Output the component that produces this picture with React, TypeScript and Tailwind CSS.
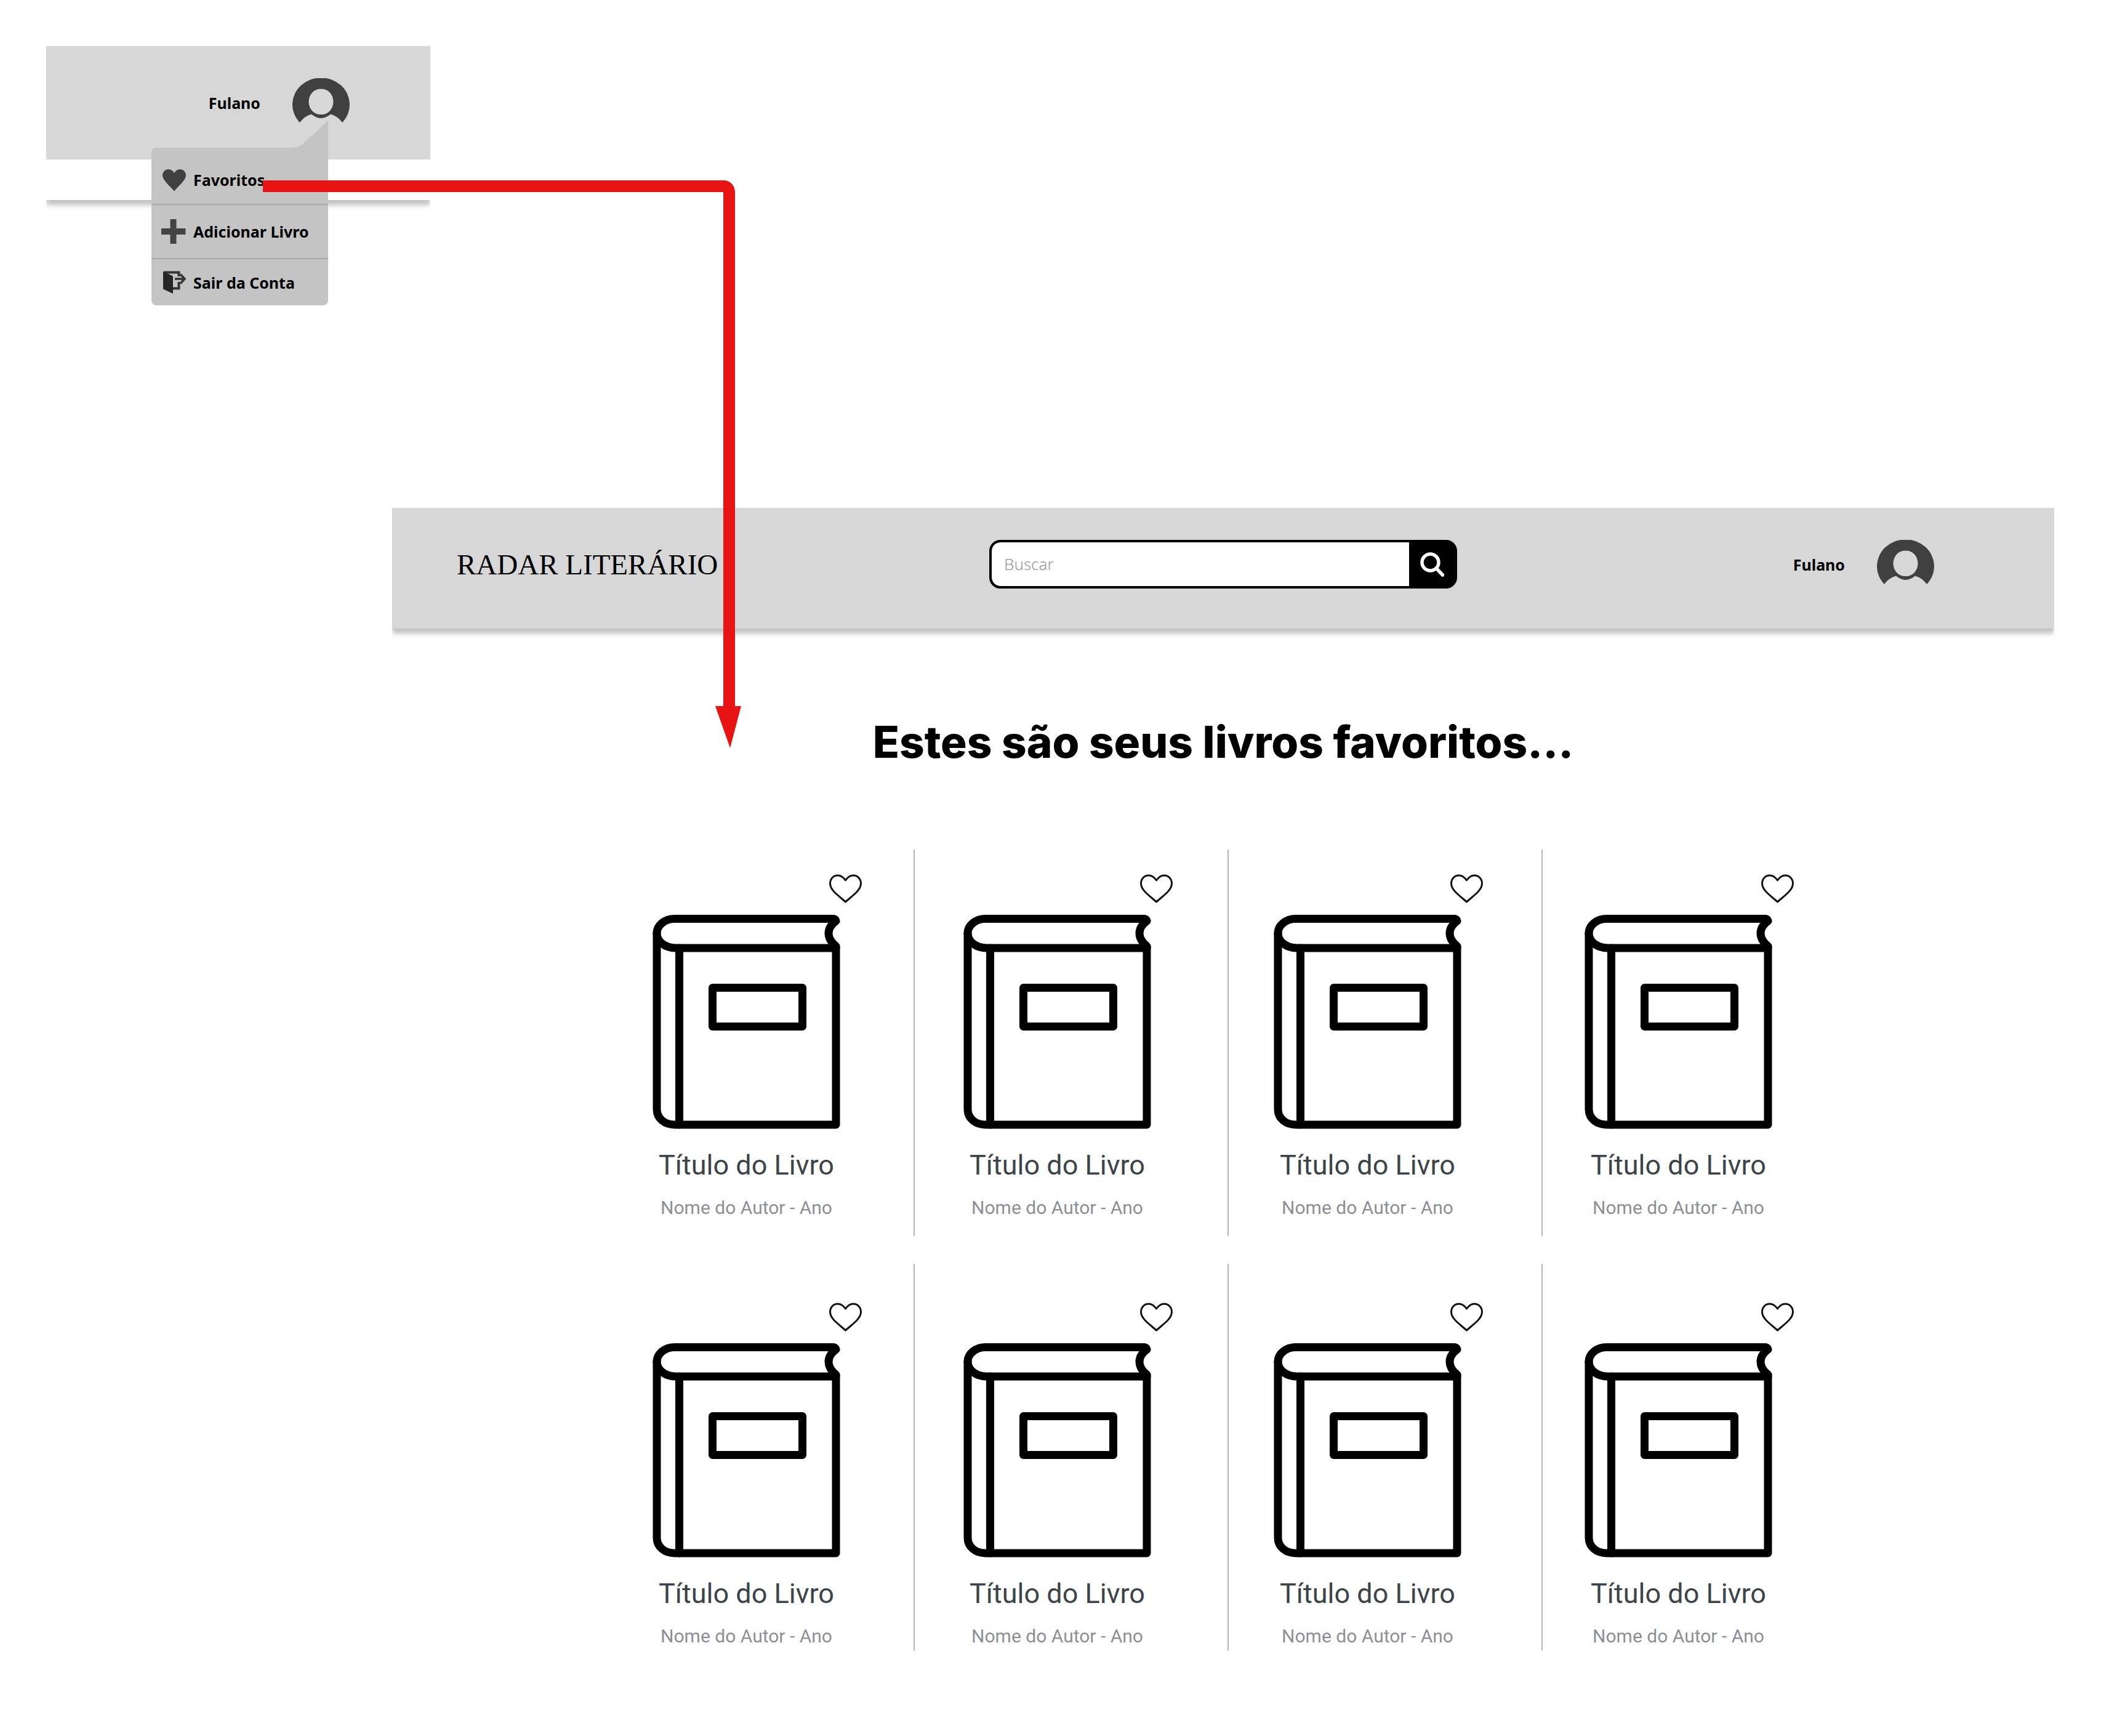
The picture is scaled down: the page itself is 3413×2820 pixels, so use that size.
import React from "react";

const shadow = "shadow-[0_8px_8px_rgba(0,0,0,0.25)] [clip-path:inset(0_0_-20px_0)]";

function Avatar() {
  return (
    <svg viewBox="0 0 94 80" className="h-20 w-[94px]" fill="#404040" aria-hidden="true">
      <path
        fillRule="evenodd"
        d="M12 72A46.500 43.500 0 1 1 81 72Q74 62 62 58.500Q46.500 71.500 31 58.500Q19 62 12 72ZM46.500 17.500A18.700 20.800 0 1 0 46.500 59A18.700 20.800 0 1 0 46.500 17.500Z"
      />
    </svg>
  );
}

function UserButton() {
  return (
    <button type="button" className="flex items-center gap-[52px] text-[25px] leading-9 font-bold">
      <span>Fulano</span>
      <Avatar />
    </button>
  );
}

function HeartSolid() {
  return (
    <svg viewBox="0 0 40 40" className="size-10" fill="#404040" aria-hidden="true">
      <path d="M21 38.500C15 31 2 21 2 13C2 7 6.500 3 11.500 3C15.500 3 19 5 21 9C23 5 26.500 3 30.500 3C35.500 3 40 7 40 13C40 21 27 31 21 38.500Z" />
    </svg>
  );
}

function Plus() {
  return (
    <svg viewBox="0 0 40 40" className="size-10" fill="#444444" aria-hidden="true">
      <path d="M14.500 0H24.500V15H39.500V25H24.500V40H14.500V25H0V15H14.500Z" />
    </svg>
  );
}

function Exit() {
  return (
    <svg viewBox="0 0 40 40" className="size-10" fill="none" aria-hidden="true">
      <path d="M4 3.500H28.500V10M28.500 19V29.500H19" stroke="#333" strokeWidth="4" />
      <path d="M3 2L19 9.500V38L3 30.500Z" fill="#262626" />
      <path d="M22 14H38M31 6.500L38 14L31 21.500" stroke="#333" strokeWidth="3.500" />
    </svg>
  );
}

const menu = [
  { label: "Favoritos", icon: <HeartSolid />, row: "h-[91px] pt-3" },
  { label: "Adicionar Livro", icon: <Plus />, row: "h-[88px] border-t-2" },
  { label: "Sair da Conta", icon: <Exit />, row: "h-[77px] border-t-2" },
];

function UserMenu() {
  return (
    <nav aria-label="Menu do usuário" className="absolute top-[165px] right-[166px] w-[287px] rounded-b-lg rounded-tl-lg bg-[#c4c4c4]">
      <svg viewBox="0 0 61 45" className="absolute -top-11 right-0 h-[45px] w-[61px]" fill="#c4c4c4" aria-hidden="true">
        <path d="M0 44C11 44 18 41 24 34L61 0V45H0Z" />
      </svg>
      <ul>
        {menu.map((m) => (
          <li key={m.label} className={`flex items-center border-[#a8a8a8] pl-4 ${m.row}`}>
            <a href="#" className="flex items-center gap-3 text-[25px] leading-9 font-bold whitespace-nowrap">
              {m.icon}
              {m.label}
            </a>
          </li>
        ))}
      </ul>
    </nav>
  );
}

function FlowArrow() {
  return (
    <svg viewBox="0 0 780 924" className="pointer-events-none absolute top-[293px] left-[427px] z-20 h-[924px] w-[780px]" fill="#e81313" aria-hidden="true">
      <path d="M0 0H749A18 19 0 0 1 767 19V854H777L759 922L735 854H748V19H0Z" />
    </svg>
  );
}

function Heart() {
  return (
    <svg viewBox="0 0 53 47" className="h-[47px] w-[53px]" fill="none" stroke="#111" strokeWidth="3" strokeLinejoin="round" aria-hidden="true">
      <path d="M26.500 10C23 5 18.500 2 14 2C7 2 1.500 7.500 1.500 15C1.500 26 14 34 26.500 45C39 34 51.500 26 51.500 15C51.500 7.500 46 2 39 2C34.500 2 30 5 26.500 10Z" />
    </svg>
  );
}

function Book() {
  return (
    <svg viewBox="0 0 305 348" className="h-[348px] w-[305px]" fill="none" stroke="#000" strokeWidth="13" strokeLinecap="round" strokeLinejoin="round" aria-hidden="true">
      <path d="M298 54H38C20 54 7 43 7 30C7 17 20 6.500 36 6.500H294Q297 7 298 10C282 22 282 38 298 51" />
      <path d="M7 30V316C7 331 20 341 36 341H298V52" />
      <path d="M43.500 54V341" />
      <rect x="97.500" y="118.500" width="146" height="63" />
    </svg>
  );
}

const columns = [
  "pl-[84px] border-r-2",
  "pl-[79px] border-r-2",
  "pl-[73px] border-r-2",
  "pl-[68px]",
];
const rows = ["pt-10 pb-[26px]", "pt-[63px] pb-[3px]"];

function BookCard({ className }: { className: string }) {
  return (
    <article className={`border-[#b5b5b5] ${className}`}>
      <div className="flex w-[340px] justify-end">
        <button type="button" aria-label="Favoritar">
          <Heart />
        </button>
      </div>
      <div className="mt-[19px] flex w-[305px] flex-col items-center whitespace-nowrap font-['Roboto',sans-serif]">
        <Book />
        <h2 className="mt-[31px] text-[45px] leading-[56px] text-[#3c4349]">Título do Livro</h2>
        <p className="mt-[21px] text-[30px] leading-10 text-[#8b8f96]">Nome do Autor - Ano</p>
      </div>
    </article>
  );
}

export default function App() {
  return (
    <div className="relative min-h-screen bg-white pt-[75px] font-['Noto_Sans',sans-serif] text-black">
      <section className="relative z-10 ml-[75px] w-[624px]">
        <div className="flex h-[184px] items-center justify-end bg-[#d7d7d7] pr-[130px]">
          <UserButton />
        </div>
        <div className={`h-[66px] bg-white ${shadow}`} />
        <UserMenu />
      </section>

      <FlowArrow />

      <div className="mt-[500px] mr-[76px] ml-[637px]">
        <header className={`grid h-[196px] grid-cols-[1fr_760px_1fr] items-center bg-[#d7d7d7] pb-[13px] ${shadow}`}>
          <a href="#" className="pl-[105px] font-['Liberation_Serif',serif] text-[47px] leading-[56px] whitespace-nowrap">
            RADAR LITERÁRIO
          </a>
          <form className="flex h-[79px] overflow-hidden rounded-[18px] border-4 border-black bg-black">
            <input
              type="search"
              aria-label="Buscar"
              placeholder="Buscar"
              className="min-w-0 flex-1 rounded-l-[14px] bg-white pl-5 text-[26px] font-light placeholder:text-[#999595]"
            />
            <button type="button" aria-label="Pesquisar" className="flex w-[74px] items-center justify-center">
              <svg viewBox="0 0 40 40" className="size-10" fill="none" stroke="#fff" strokeWidth="5.500" strokeLinecap="round" aria-hidden="true">
                <circle cx="17.500" cy="16.500" r="13.500" />
                <path d="M27.500 26.500L37.500 37" />
              </svg>
            </button>
          </form>
          <div className="flex justify-end pr-[194px]">
            <UserButton />
          </div>
        </header>

        <main>
          <h1 className="mt-36 text-center font-['Inter',sans-serif] text-[71px] leading-[80px] font-extrabold">
            Estes são seus livros favoritos...
          </h1>
          <div className="mt-[135px] grid grid-cols-4 gap-y-[45px] pr-[321px] pl-[339px]">
            {rows.map((row) => columns.map((col) => <BookCard key={row + col} className={`${row} ${col}`} />))}
          </div>
        </main>
      </div>
    </div>
  );
}
